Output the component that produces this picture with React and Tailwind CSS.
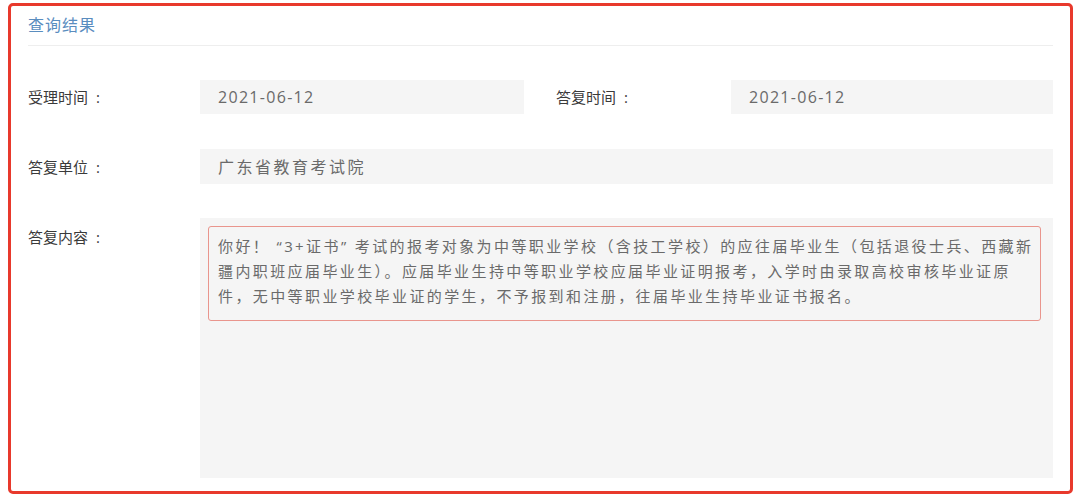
import React from "react";

const font = { fontFamily: '"Open Sans", "Noto Sans CJK SC", sans-serif' };

const reply =
  [
    "你好！ “3+证书” 考试的报考对象为中等职业学校（含技工学校）的应往届毕业生（包括退役士兵、西藏新",
    "疆内职班应届毕业生）。应届毕业生持中等职业学校应届毕业证明报考，入学时由录取高校审核毕业证原",
    "件，无中等职业学校毕业证的学生，不予报到和注册，往届毕业生持毕业证书报名。",
  ];

const Label = ({ text, className = "" }) => (
  <div className={`text-[15px] leading-[20px] text-[#3a3a3a] shrink-0 ${className}`}>
    {text}
    <span className="ml-[8px]">:</span>
  </div>
);

const Field = ({ children, className = "" }) => (
  <div
    className={`h-[34px] bg-[#f5f5f5] flex items-center pl-[18px] text-[16px] text-[#6a6a6a] ${className}`}
  >
    {children}
  </div>
);

const App = () => {
  return (
    <div className="w-[1080px] h-[498px] bg-white pt-[3px] pl-[8px] pr-[7px] pb-[4px]" style={font}>
      <div className="h-full border-[3px] border-[#e8392c] rounded-[5px] px-[17px] flex flex-col">
        <div className="pt-[9px] pb-[10px] border-b border-[#eeeeee] text-[16px] leading-[20px] tracking-[1px] text-[#5a8dbf]">
          查询结果
        </div>

        <div className="mt-[34px] flex items-center">
          <Label className="w-[172px]" text="受理时间" />
          <Field className="w-[324px] tracking-[1.3px]">2021-06-12</Field>
          <Label className="ml-[32px] w-[175px]" text="答复时间" />
          <Field className="flex-1 tracking-[1.3px]">2021-06-12</Field>
        </div>

        <div className="mt-[35px] flex items-center">
          <Label className="w-[172px]" text="答复单位" />
          <Field className="flex-1 h-[35px] text-[15px] tracking-[2.5px]">广东省教育考试院</Field>
        </div>

        <div className="mt-[34px] flex items-start">
          <Label className="w-[172px] pt-[9px]" text="答复内容" />
          <div className="flex-1 h-[260px] bg-[#f5f5f5] pt-[8px] pl-[8px] pr-[12px]">
            <div className="h-[95px] border border-[#e9958d] rounded-[3px] pt-[7px] pl-[9px] text-[15px] leading-[25px] tracking-[2.4px] text-[#6a6a6a] whitespace-nowrap">
              {reply.map((line, i) => (
                <div key={i}>{line}</div>
              ))}
            </div>
          </div>
        </div>
      </div>
    </div>
  );
};

export default App;
